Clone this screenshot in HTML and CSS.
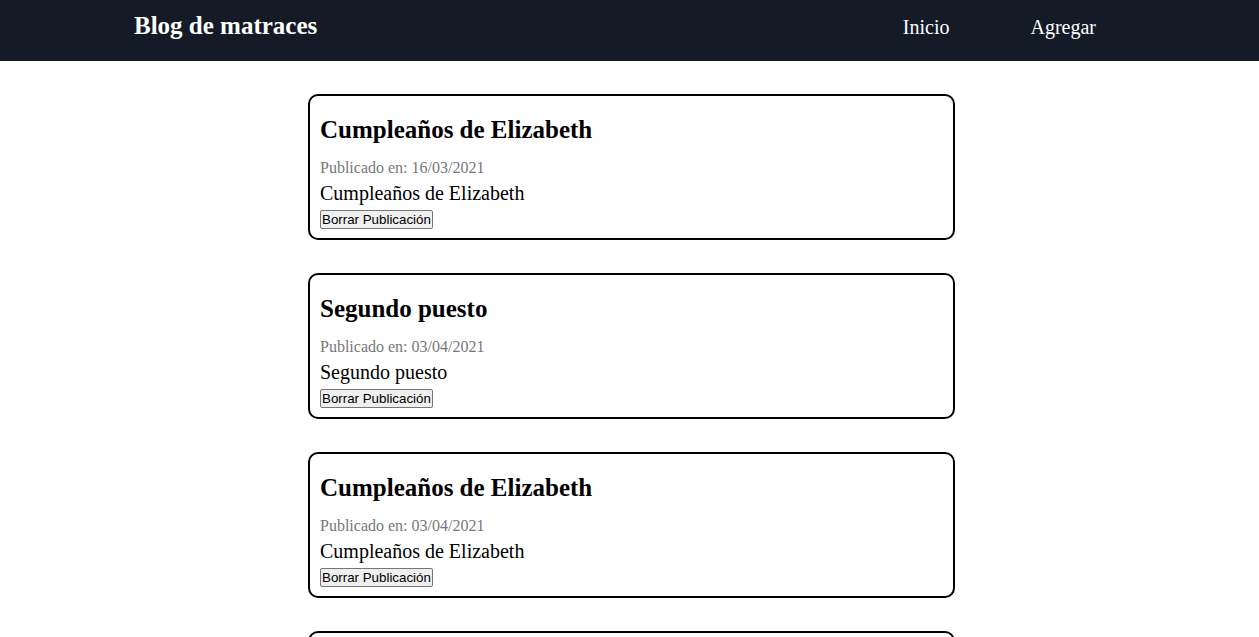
FILE: index.html
```html
<!DOCTYPE html>
<html lang="es">
<head>
<meta charset="utf-8">
<title>Blog de matraces</title>
<link rel="stylesheet" href="styles.css">
</head>
<body>
<header class="topbar">
  <div class="brand">Blog de matraces</div>
  <nav class="nav">
    <a class="nav-link" href="#">Inicio</a>
    <a class="nav-link" href="#">Agregar</a>
  </nav>
</header>
<main class="posts">
  <article class="post">
    <h2 class="post-title">Cumpleaños de Elizabeth</h2>
    <p class="post-date">Publicado en: 16/03/2021</p>
    <p class="post-body">Cumpleaños de Elizabeth</p>
    <button class="post-delete">Borrar Publicación</button>
  </article>
  <article class="post">
    <h2 class="post-title">Segundo puesto</h2>
    <p class="post-date">Publicado en: 03/04/2021</p>
    <p class="post-body">Segundo puesto</p>
    <button class="post-delete">Borrar Publicación</button>
  </article>
  <article class="post">
    <h2 class="post-title">Cumpleaños de Elizabeth</h2>
    <p class="post-date">Publicado en: 03/04/2021</p>
    <p class="post-body">Cumpleaños de Elizabeth</p>
    <button class="post-delete">Borrar Publicación</button>
  </article>
  <article class="post">
    <h2 class="post-title">Tercer puesto</h2>
    <p class="post-date">Publicado en: 03/04/2021</p>
    <p class="post-body">Tercer puesto</p>
    <button class="post-delete">Borrar Publicación</button>
  </article>
</main>
</body>
</html>
```
FILE: styles.css
```css
html, body {
  margin: 0;
  padding: 0;
  background: #ffffff;
  font-family: "Liberation Serif", "Times New Roman", serif;
  color: #000;
}

.topbar {
  height: 61px;
  background: #141b26;
  display: flex;
  align-items: flex-start;
  justify-content: space-between;
  padding: 12px 163px 0 134px;
  box-sizing: border-box;
}

.brand {
  color: #fff;
  font-weight: bold;
  font-size: 25px;
}

.nav {
  display: flex;
  gap: 81px;
  padding-top: 4px;
}

.nav-link {
  color: #fff;
  text-decoration: none;
  font-size: 20px;
}

.posts {
  display: flex;
  flex-direction: column;
  align-items: center;
  gap: 33px;
  padding: 33px 0 40px 4px;
}

.post {
  width: 647px;
  box-sizing: border-box;
  border: 2px solid #000;
  border-radius: 10px;
  padding: 0 10px 9px;
}

.post-title {
  font-size: 25px;
  font-weight: bold;
  margin: 20px 0 15px;
}

.post-date {
  font-size: 16px;
  color: #777777;
  margin: 0 0 5px;
}

.post-body {
  font-size: 20px;
  margin: 0 0 5px;
}

.post-delete {
  display: block;
  font-family: "Liberation Sans", Arial, sans-serif;
  font-size: 13.33px;
  padding: 1px 1px;
  border: 1px solid #767676;
  border-radius: 2px;
  background: #efefef;
  color: #000;
}
```
